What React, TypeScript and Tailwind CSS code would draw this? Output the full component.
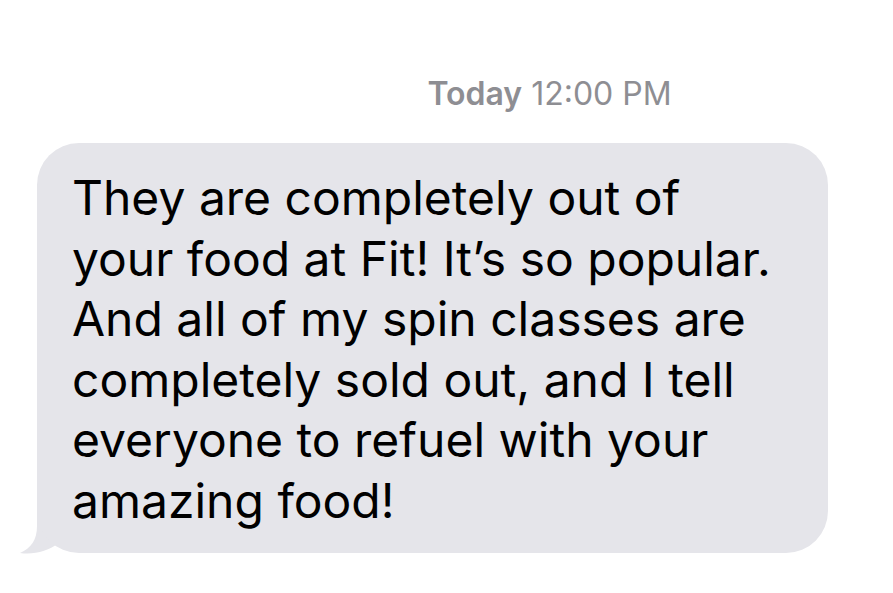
import React from "react";

export default function App() {
  const lines = [
    "They are completely out of",
    "your food at Fit! It\u2019s so popular.",
    "And all of my spin classes are",
    "completely sold out, and I tell",
    "everyone to refuel with your",
    "amazing food!",
  ];
  return (
    <div
      className="relative w-[893px] h-[593px] bg-white overflow-hidden"
      style={{ fontFamily: 'Inter, "Liberation Sans", Arial, sans-serif' }}
    >
      <div className="mt-[74px] ml-[206px] flex justify-center h-[40px] leading-[40px] text-[32px] text-[#8e8e93] whitespace-nowrap">
        <span className="font-semibold">Today</span>
        <span>&nbsp;12:00 PM</span>
      </div>
      <div className="relative mt-[29px] ml-[37px] w-[791px]">
        <svg
          className="absolute left-[-22px] bottom-[-2px]"
          width="80"
          height="70"
          viewBox="15 485 80 70"
        >
          <path
            d="M37,490 L37,526 C37,540 31,548 20,553 C34,555 48,551 59,543 L70,500 Z"
            fill="#e5e5ea"
          />
        </svg>
        <div className="relative rounded-[42px] bg-[#e5e5ea] pl-[35px] pt-[25px] pb-[22px] text-[48px] leading-[60.5px] text-black whitespace-nowrap">
          {lines.map((l, i) => (
            <div key={i}>{l}</div>
          ))}
        </div>
      </div>
    </div>
  );
}
